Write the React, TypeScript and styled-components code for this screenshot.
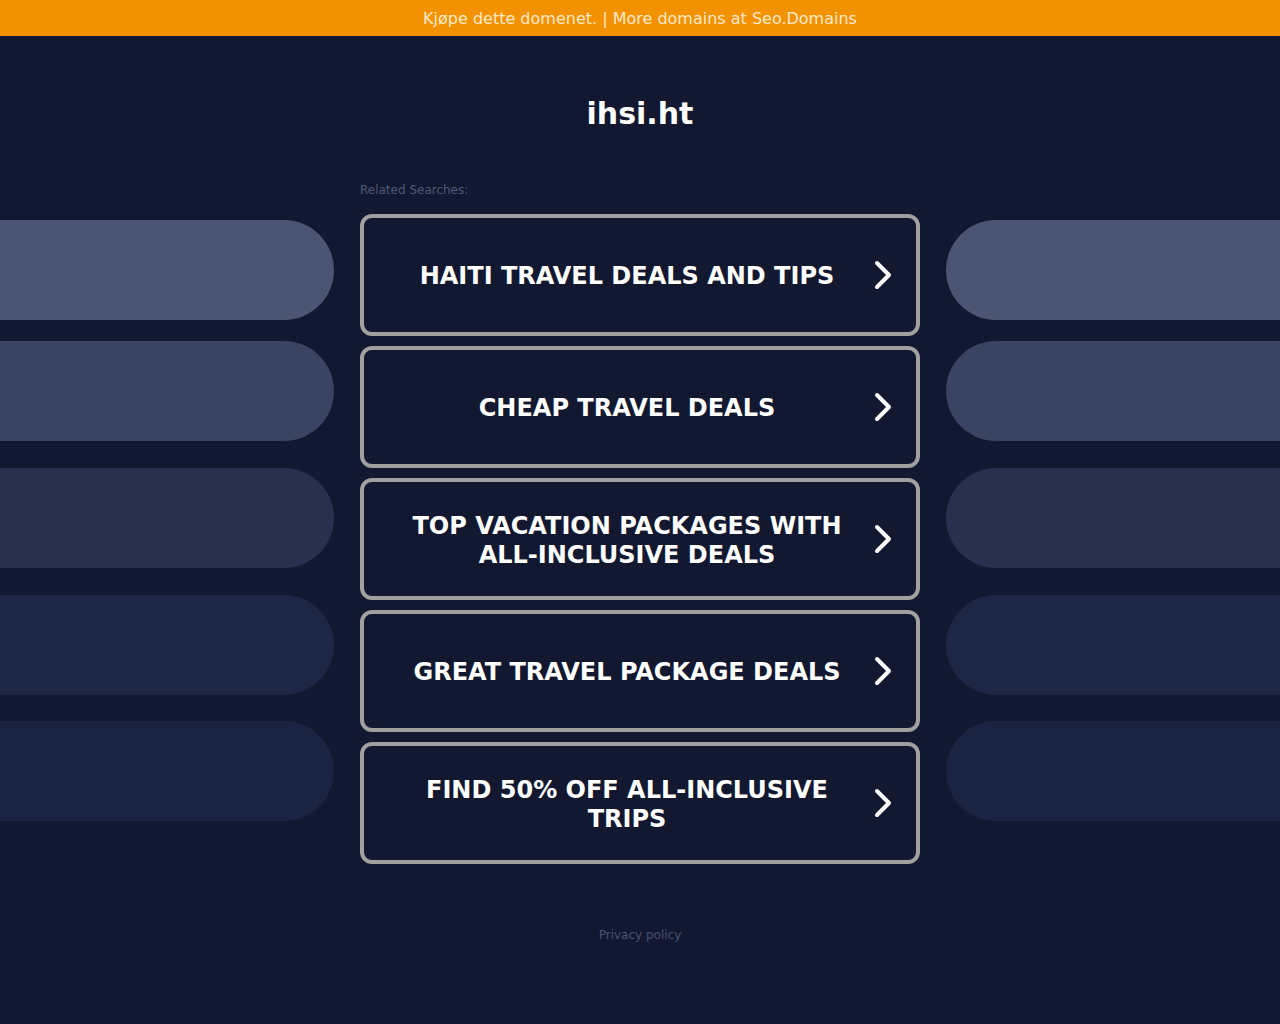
import React from "react";
import styled, { createGlobalStyle } from "styled-components";

const searches = [
  "Haiti Travel Deals and Tips",
  "Cheap Travel Deals",
  "Top Vacation Packages with All-Inclusive Deals",
  "Great Travel Package Deals",
  "Find 50% Off All-Inclusive Trips",
];

// side pills are not perfectly aligned with the cards
const pills = [
  { color: "#4b5573", gapBefore: 0 },
  { color: "#3a4462", gapBefore: 21 },
  { color: "#28304e", gapBefore: 27 },
  { color: "#1e2646", gapBefore: 27 },
  { color: "#1b2342", gapBefore: 26 },
];

const GlobalStyle = createGlobalStyle`
  body {
    margin: 0;
    background: #111830;
    font-family: "DejaVu Sans", "Liberation Sans", sans-serif;
  }
`;

const Chevron = () => (
  <svg width="20" height="30" viewBox="0 0 20 30" fill="none">
    <polyline
      points="4,3 16,15 4,27"
      stroke="#ffffff"
      strokeWidth="4"
      strokeLinecap="round"
      strokeLinejoin="round"
    />
  </svg>
);

const App = () => (
  <>
    <GlobalStyle />
    <TopBar>Kjøpe dette domenet. | More domains at Seo.Domains</TopBar>
    <Title>ihsi.ht</Title>
    <Main>
      <PillColumn>
        {pills.map((p, i) => (
          <Pill key={i} $side="left" $color={p.color} $gapBefore={p.gapBefore} />
        ))}
      </PillColumn>
      <Center>
        <Label>Related Searches:</Label>
        <CardList>
          {searches.map((s) => (
            <Card key={s} href="#">
              <CardText>{s}</CardText>
              <Arrow>
                <Chevron />
              </Arrow>
            </Card>
          ))}
        </CardList>
      </Center>
      <PillColumn>
        {pills.map((p, i) => (
          <Pill key={i} $side="right" $color={p.color} $gapBefore={p.gapBefore} />
        ))}
      </PillColumn>
    </Main>
    <Footer>Privacy policy</Footer>
  </>
);

const TopBar = styled.div`
  height: 36px;
  background: #f39200;
  display: flex;
  align-items: center;
  justify-content: center;
  color: #fde9c9;
  font-size: 16px;
`;

const Title = styled.h1`
  margin: 58px 0 0;
  text-align: center;
  color: #ffffff;
  font-size: 30px;
  line-height: 40px;
  font-weight: 700;
`;

const Main = styled.div`
  display: grid;
  grid-template-columns: 1fr 560px 1fr;
  column-gap: 26px;
  margin-top: 48px;
`;

const PillColumn = styled.div`
  display: flex;
  flex-direction: column;
  padding-top: 38px;
`;

const Pill = styled.div<{ $side: "left" | "right"; $color: string; $gapBefore: number }>`
  height: 100px;
  margin-top: ${({ $gapBefore }) => $gapBefore}px;
  background: ${({ $color }) => $color};
  border-radius: ${({ $side }) => ($side === "left" ? "0 50px 50px 0" : "50px 0 0 50px")};
`;

const Center = styled.div`
  display: flex;
  flex-direction: column;
`;

const Label = styled.div`
  font-size: 12px;
  line-height: 16px;
  color: #4e5876;
  margin-bottom: 16px;
`;

const CardList = styled.div`
  display: flex;
  flex-direction: column;
  gap: 10px;
`;

const Card = styled.a`
  box-sizing: border-box;
  height: 122px;
  display: flex;
  align-items: center;
  border: 4px solid #a0a0a0;
  border-radius: 12px;
  padding: 0 11px 0 29px;
  text-decoration: none;
  color: #ffffff;
`;

const CardText = styled.span`
  flex: 1;
  padding-top: 3px;
  text-align: center;
  text-transform: uppercase;
  font-size: 24px;
  line-height: 29px;
  font-weight: 700;
`;

const Arrow = styled.span`
  width: 44px;
  display: flex;
  justify-content: center;
  align-items: center;
`;

const Footer = styled.div`
  margin-top: 63px;
  text-align: center;
  font-size: 12px;
  line-height: 16px;
  color: #4a5170;
  padding-bottom: 80px;
`;

export default App;
